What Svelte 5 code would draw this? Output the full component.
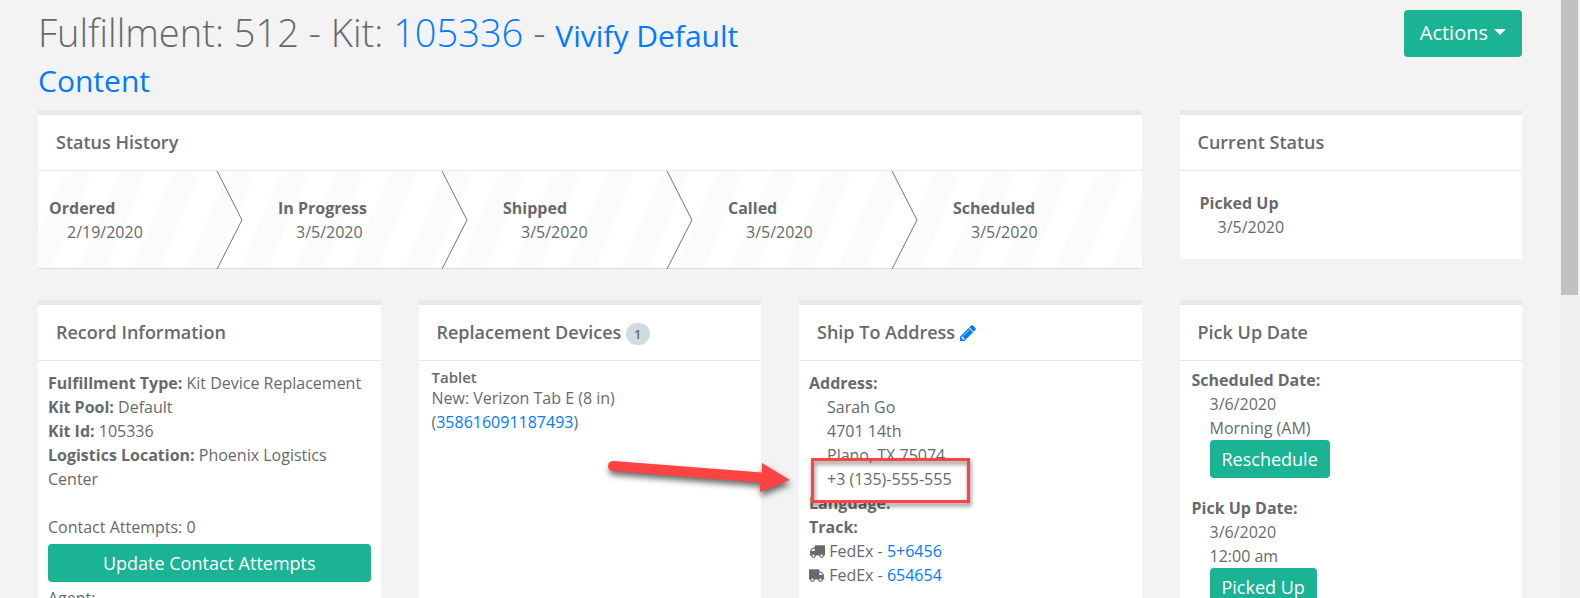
<script>
  const steps = [
    { name: 'Ordered', date: '2/19/2020' },
    { name: 'In Progress', date: '3/5/2020' },
    { name: 'Shipped', date: '3/5/2020' },
    { name: 'Called', date: '3/5/2020' },
    { name: 'Scheduled', date: '3/5/2020' }
  ];
  const pencil =
    'M491 1536l91-91-235-235-91 91v107h128v128h107zm523-928q0-22-22-22-10 0-17 7l-542 542q-7 7-7 17 0 22 22 22 10 0 17-7l542-542q7-7 7-17zm-54-192l416 416-832 832h-416v-416zm683 96q0 53-37 90l-166 166-416-416 166-165q36-38 90-38 53 0 91 38l235 234q37 39 37 91z';
  const truck =
    'M640 1408q0-52-38-90t-90-38-90 38-38 90 38 90 90 38 90-38 38-90zm-384-512h384v-256h-158q-13 0-22 9l-195 195q-9 9-9 22v30zm1280 512q0-52-38-90t-90-38-90 38-38 90 38 90 90 38 90-38 38-90zm256-1088v1024q0 15-4 26.5t-13.5 18.5-16.5 11.5-23.5 6-22.5 2-25.5 0-22.5-.5q0 106-75 181t-181 75-181-75-75-181h-384q0 106-75 181t-181 75-181-75-75-181h-64q-3 0-22.5.5t-25.5 0-22.5-2-23.5-6-16.5-11.5-13.5-18.5-4-26.5q0-26 19-45t45-19v-320q0-8-.5-35t0-38 2.5-34.5 6.5-37 14-30.5 22.5-30l198-198q19-19 50.5-32t58.5-13h160v-192q0-26 19-45t45-19h1024q26 0 45 19t19 45z';
  const tracking = [
    { carrier: 'FedEx', number: '5+6456', flip: false },
    { carrier: 'FedEx', number: '654654', flip: true }
  ];
</script>

<div class="page">
  <main>
    <header class="top">
      <h1>
        Fulfillment: 512 - Kit: <a href="#kit">105336</a> -
        <a class="small" href="#content">Vivify Default Content</a>
      </h1>
      <button class="btn large" type="button">Actions<span class="caret"></span></button>
    </header>

    <div class="grid">
      <section class="card wide">
        <h2>Status History</h2>
        <ol class="steps">
          {#each steps as step, i}
            <li>
              <b>{step.name}</b>
              <span class="indent">{step.date}</span>
              {#if i < steps.length - 1}
                <svg class="chevron" viewBox="0 0 27 98" aria-hidden="true">
                  <path d="M1 0 26 49 1 98" fill="none" stroke="#777" stroke-width="1" />
                </svg>
              {/if}
            </li>
          {/each}
        </ol>
      </section>

      <section class="card">
        <h2>Current Status</h2>
        <div class="body current">
          <b>Picked Up</b>
          <span class="indent">3/5/2020</span>
        </div>
      </section>

      <section class="card tall">
        <h2>Record Information</h2>
        <div class="body">
          <p><b>Fulfillment Type:</b> Kit Device Replacement</p>
          <p><b>Kit Pool:</b> Default</p>
          <p><b>Kit Id:</b> 105336</p>
          <p><b>Logistics Location:</b> Phoenix Logistics Center</p>
          <p class="attempts">Contact Attempts: 0</p>
          <button class="btn block" type="button">Update Contact Attempts</button>
          <p class="agent">Agent:</p>
        </div>
      </section>

      <section class="card tall">
        <h2>Replacement Devices <span class="badge">1</span></h2>
        <div class="body devices">
          <h3>Tablet</h3>
          <p>New: Verizon Tab E (8 in)</p>
          <p>(<a href="#device">358616091187493</a>)</p>
        </div>
      </section>

      <section class="card tall">
        <h2>
          Ship To Address
          <a href="#edit" aria-label="Edit address"><svg class="pencil" viewBox="128 128 1536 1536" aria-hidden="true">
            <path fill="currentColor" d={pencil} />
          </svg></a>
        </h2>
        <div class="body">
          <b>Address:</b>
          <address>
            Sarah Go<br />4701 14th<br />Plano, TX 75074<br />+3 (135)-555-555
          </address>
          <b>Language:</b>
          <b>Track:</b>
          {#each tracking as t}
            <p>
              <svg class="truck" class:flip={t.flip} viewBox="0 0 1792 1792" aria-hidden="true">
                <path fill="currentColor" d={truck} />
              </svg>
              {t.carrier} - <a href="#track">{t.number}</a>
            </p>
          {/each}
        </div>
        <div class="callout"></div>
        <svg class="arrow" viewBox="0 0 200 50" aria-hidden="true">
          <path fill="#ff4343" d="M12.500 6 161 17.500V8L189 25 159 37V27.500L11.500 16A5 5 0 0 1 12.500 6Z" />
        </svg>
      </section>

      <section class="card tall">
        <h2>Pick Up Date</h2>
        <div class="body pickup">
          <b>Scheduled Date:</b>
          <div class="indent">
            <p>3/6/2020</p>
            <p>Morning (AM)</p>
            <button class="btn" type="button">Reschedule</button>
          </div>
          <b class="next">Pick Up Date:</b>
          <div class="indent">
            <p>3/6/2020</p>
            <p>12:00 am</p>
            <button class="btn" type="button">Picked Up</button>
          </div>
        </div>
      </section>
    </div>
  </main>
  <div class="scrollbar" aria-hidden="true"><div class="thumb"></div></div>
</div>

<style>
  :global(body) {
    margin: 0;
    background: #f3f3f3;
    overflow: hidden;
  }
  .page {
    display: flex;
    height: 100vh;
    overflow: hidden;
    color: #676a6c;
    font: 16px/24px 'Open Sans', sans-serif;
  }
  main {
    flex: 1;
    min-width: 0;
    padding: 0 38px;
  }
  a {
    color: #007bff;
    text-decoration: none;
  }
  h1,
  h2,
  h3,
  p,
  ol {
    margin: 0;
    padding: 0;
  }
  .top {
    display: flex;
    justify-content: space-between;
    align-items: flex-start;
    padding-top: 10px;
  }
  h1 {
    max-width: 723px;
    font-size: 38px;
    line-height: 45px;
    font-weight: 300;
  }
  h1 .small {
    font-size: 30px;
    line-height: 30px;
    font-weight: 400;
  }
  .btn {
    display: inline-block;
    border: 0;
    border-radius: 4px;
    padding: 5px 12px;
    background: #1ab394;
    color: #fff;
    font: 18px/28px 'Open Sans', sans-serif;
  }
  .btn.large {
    padding: 7px 16px 9px;
    font-size: 20px;
    line-height: 31px;
  }
  .btn.block {
    display: block;
    width: 100%;
  }
  .caret {
    display: inline-block;
    margin-left: 6px;
    vertical-align: 5px;
    border: 6px solid transparent;
    border-top-color: #fff;
    border-bottom: 0;
  }
  .grid {
    display: grid;
    grid-template-columns: repeat(4, minmax(0, 1fr));
    gap: 31px 38px;
    align-items: start;
    padding-top: 10px;
  }
  .card {
    position: relative;
    border-top: 5px solid #e7eaec;
    background: #fff;
  }
  .wide {
    grid-column: span 3;
  }
  .tall {
    min-height: 320px;
  }
  h2 {
    padding: 15px 18px 16px;
    border-bottom: 1px solid #e7eaec;
    font-size: 18px;
    line-height: 24px;
    font-weight: 550;
  }
  b,
  .indent {
    display: block;
  }
  p b {
    display: inline;
  }
  b {
    font-weight: 700;
  }
  .indent {
    padding-left: 18px;
  }
  .steps {
    display: flex;
    list-style: none;
    border-bottom: 1px solid #dcdcdc;
    background: repeating-linear-gradient(113deg, #fff 0 25px, #fbfbfb 25px 50px);
  }
  .steps li {
    position: relative;
    flex: 0 0 225px;
    box-sizing: border-box;
    padding: 25px 0 24px 26px;
  }
  .steps li:first-child {
    flex-basis: 214px;
    padding-left: 11px;
  }
  .steps li:last-child {
    flex: 1 1 0;
  }
  .chevron {
    position: absolute;
    top: 0;
    right: 9px;
    width: 27px;
    height: 98px;
  }
  .body {
    padding: 10px;
  }
  .current {
    padding: 20px;
  }
  .attempts {
    margin: 24px 0 5px;
  }
  .agent {
    margin-top: 4px;
  }
  .badge {
    display: inline-block;
    padding: 4px 8px;
    border-radius: 11px;
    background: #d1dade;
    font-size: 13px;
    line-height: 14px;
    margin: -4px 0;
    font-weight: 600;
  }
  .devices {
    padding: 7px 13px;
  }
  h3 {
    font-size: 15px;
    line-height: 18px;
    font-weight: 600;
  }
  .pickup {
    padding: 7px 12px;
  }
  .next {
    margin-top: 18px;
  }
  .indent .btn {
    display: block;
  }
  address {
    padding-left: 18px;
    font-style: normal;
  }
  .pencil {
    width: 16px;
    height: 16px;
    vertical-align: -2px;
  }
  .truck {
    width: 16px;
    height: 16px;
    vertical-align: -2px;
  }
  .flip {
    transform: scaleX(-1);
  }
  .callout {
    position: absolute;
    top: 153px;
    left: 12px;
    width: 153px;
    height: 39px;
    border: 3px solid #ff4343;
    filter: drop-shadow(1px 3px 2px rgba(0, 0, 0, 0.5));
  }
  .arrow {
    position: absolute;
    top: 150px;
    left: -198px;
    width: 200px;
    height: 50px;
    overflow: visible;
    filter: drop-shadow(1px 4px 3px rgba(0, 0, 0, 0.6));
  }
  .scrollbar {
    width: 20px;
    background: #f0f0f0;
  }
  .thumb {
    width: 17px;
    height: 295px;
    margin-left: 1px;
    background: #c1c1c1;
  }
</style>
